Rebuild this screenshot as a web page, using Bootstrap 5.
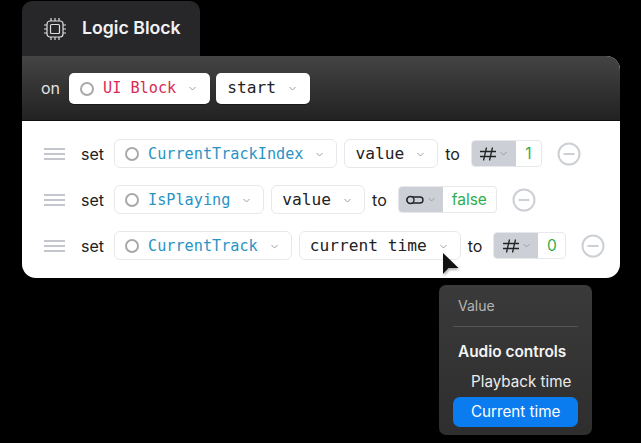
<!DOCTYPE html>
<html lang="en">
<head>
    <meta charset="UTF-8">
    <meta name="viewport" content="width=device-width, initial-scale=1.0">
    <title>Logic Block</title>
    <link href="https://cdn.jsdelivr.net/npm/bootstrap@5.3.0/dist/css/bootstrap.min.css" rel="stylesheet">
    <style>
        html, body { height: 100%; }
        body {
            background: #000;
            font-family: Inter, "Liberation Sans", sans-serif;
            color: #222;
            overflow: hidden;
        }
        .stage { position: relative; width: 641px; height: 443px; padding: 1px 21px 0 22px; }
        .block-tab {
            width: 178px; height: 55px;
            background: #27272a;
            border-radius: 10px 10px 0 0;
            color: #f2f2f2;
            font-size: 17.7px; font-weight: 600;
            padding-left: 22px;
            gap: 16px;
        }
        .block-card { border-radius: 0 14px 14px 14px; overflow: hidden; background: #fff; }
        .block-head {
            height: 65px;
            background: linear-gradient(#444, #222);
            border-bottom: 1px solid #111;
            padding-left: 19px;
            gap: 6px;
            color: #e4e4e4;
            font-size: 16px;
        }
        .block-head .word { margin-right: 3px; }
        .block-body { height: 157px; padding: 18px 0 0 22px; gap: 17px; }
        .block-row { height: 29px; gap: 7px; font-size: 16px; color: #222; }
        .grip { width: 21px; height: 12px; margin-right: 9px; flex: none; }
        .word { flex: none; }
        .word-set { margin-right: 3px; }
        .word-to { margin-right: 4px; }
        .chip {
            height: 29px;
            border: 1px solid #e6e8eb;
            border-radius: 6px;
            background: #fff;
            font-family: "DejaVu Sans Mono", "Liberation Mono", monospace;
            font-size: 16.2px;
            color: #222;
            padding: 1px 13px 0 10px;
            flex: none;
            white-space: nowrap;
        }
        .block-head .chip { height: 31px; border: 0; border-radius: 5px; padding: 1px 14px 0 11px; box-shadow: 0 1px 1px rgba(0,0,0,.4); }
        .ring { width: 14px; height: 14px; border: 2px solid #a9a9a9; border-radius: 50%; margin-right: 9px; flex: none; }
        .chev { width: 7px; height: 5px; margin-left: 13px; flex: none; }
        .txt-red { color: #d92a55; font-size: 15.2px; }
        .txt-blue { color: #2a93c4; font-size: 15.2px; }
        .type-group {
            height: 27px;
            border: 1px solid #e6e8eb;
            border-radius: 4px;
            overflow: hidden;
            flex: none;
        }
        .type-pick { width: 44px; background: #ccd0d6; gap: 4px; }
        .type-pick .chev { margin-left: 0; }
        .type-val { color: #2fae4e; font-size: 15.5px; padding: 0 9px; }
        .num-one { width: 25px; padding: 0; }
        .num-zero { width: 27px; padding: 0; }
        .minus { width: 24px; height: 24px; margin-left: 8px; flex: none; }
        .cursor { position: absolute; left: 442px; top: 252px; width: 19px; height: 25px; filter: drop-shadow(1px 2px 1px rgba(0,0,0,.3)); overflow: visible; }
        .value-menu {
            position: absolute; left: 439px; top: 285px;
            width: 153px; height: 150px;
            background: linear-gradient(#3a3a3a, #2e2e2e);
            border-radius: 7px;
            padding: 0 14px;
            font-size: 15.2px;
            color: #ececec;
        }
        .menu-title { color: #b5b5b5; font-size: 14px; height: 30px; margin: 6px 0 5px 5px; line-height: 30px; }
        .menu-line { height: 1px; background: #555; margin-bottom: 14px; }
        .menu-group { font-weight: 600; margin-left: 5px; height: 22px; line-height: 22px; color: #f4f4f4; font-size: 15.4px; }
        .menu-item { height: 30px; line-height: 30px; padding-left: 18px; }
        .menu-item-on { background: #0a7cf0; border-radius: 7px; color: #fff; }
    </style>
</head>
<body>
<svg width="0" height="0" class="d-block">
    <defs>
        <symbol id="chev" viewBox="0 0 7 5"><path d="M.5 1l3 3 3-3" fill="none" stroke="#9aa0a6" stroke-width="1"/></symbol>
        <symbol id="grip" viewBox="0 0 21 12"><path d="M0 1h21M0 6h21M0 11h21" stroke="#c3c7cd" stroke-width="2"/></symbol>
        <symbol id="minus" viewBox="0 0 24 24"><circle cx="12" cy="12" r="10.5" fill="none" stroke="#ccd0d5" stroke-width="2"/><path d="M6.5 12h11" stroke="#ccd0d5" stroke-width="2"/></symbol>
        <symbol id="hash" viewBox="0 0 16 14"><path d="M0 4.5h16M0 9.5h16M6.5 .5L3.5 13.5M12.5 .5L9.5 13.5" fill="none" stroke="#222" stroke-width="1.3"/></symbol>
    </defs>
</svg>
<div class="stage">
    <div class="block-tab d-flex align-items-center">
        <svg width="22" height="22" viewBox="0 0 22 22" fill="none" stroke="#ddd" stroke-width="1.2">
            <rect x="3" y="3" width="16" height="16" rx="3"/>
            <rect x="6.5" y="6.5" width="9" height="9" rx="1"/>
            <path d="M7 0v3M11 0v3M15 0v3M7 19v3M11 19v3M15 19v3M0 7h3M0 11h3M0 15h3M19 7h3M19 11h3M19 15h3"/>
        </svg>
        <span>Logic Block</span>
    </div>
    <div class="block-card">
        <div class="block-head d-flex align-items-center">
            <span class="word">on</span>
            <div class="chip d-flex align-items-center"><span class="ring"></span><span class="txt-red">UI Block</span><svg class="chev"><use href="#chev"/></svg></div>
            <div class="chip d-flex align-items-center"><span>start</span><svg class="chev"><use href="#chev"/></svg></div>
        </div>
        <div class="block-body d-flex flex-column">
            <div class="block-row d-flex align-items-center">
                <svg class="grip"><use href="#grip"/></svg>
                <span class="word word-set">set</span>
                <div class="chip d-flex align-items-center"><span class="ring"></span><span class="txt-blue">CurrentTrackIndex</span><svg class="chev"><use href="#chev"/></svg></div>
                <div class="chip d-flex align-items-center"><span>value</span><svg class="chev"><use href="#chev"/></svg></div>
                <span class="word word-to">to</span>
                <div class="type-group d-flex">
                    <div class="type-pick d-flex align-items-center justify-content-center"><svg width="16" height="14"><use href="#hash"/></svg><svg class="chev"><use href="#chev"/></svg></div>
                    <div class="type-val num-one d-flex align-items-center justify-content-center">1</div>
                </div>
                <svg class="minus"><use href="#minus"/></svg>
            </div>
            <div class="block-row d-flex align-items-center">
                <svg class="grip"><use href="#grip"/></svg>
                <span class="word word-set">set</span>
                <div class="chip d-flex align-items-center"><span class="ring"></span><span class="txt-blue">IsPlaying</span><svg class="chev"><use href="#chev"/></svg></div>
                <div class="chip d-flex align-items-center"><span>value</span><svg class="chev"><use href="#chev"/></svg></div>
                <span class="word word-to">to</span>
                <div class="type-group d-flex">
                    <div class="type-pick d-flex align-items-center justify-content-center">
                        <svg width="18" height="10" viewBox="0 0 18 10" fill="none" stroke="#222" stroke-width="1.4"><rect x="1" y="2" width="16" height="6" rx="3"/><circle cx="4.5" cy="5" r="3.5" fill="#ccd0d6"/></svg>
                        <svg class="chev"><use href="#chev"/></svg>
                    </div>
                    <div class="type-val d-flex align-items-center">false</div>
                </div>
                <svg class="minus"><use href="#minus"/></svg>
            </div>
            <div class="block-row d-flex align-items-center">
                <svg class="grip"><use href="#grip"/></svg>
                <span class="word word-set">set</span>
                <div class="chip d-flex align-items-center"><span class="ring"></span><span class="txt-blue">CurrentTrack</span><svg class="chev"><use href="#chev"/></svg></div>
                <div class="chip d-flex align-items-center"><span>current time</span><svg class="chev"><use href="#chev"/></svg></div>
                <span class="word word-to">to</span>
                <div class="type-group d-flex">
                    <div class="type-pick d-flex align-items-center justify-content-center"><svg width="16" height="14"><use href="#hash"/></svg><svg class="chev"><use href="#chev"/></svg></div>
                    <div class="type-val num-zero d-flex align-items-center justify-content-center">0</div>
                </div>
                <svg class="minus"><use href="#minus"/></svg>
            </div>
        </div>
    </div>

    <svg class="cursor" viewBox="0 0 19 25"><path d="M1 1V22L6.5 16H16.5z" fill="#111"/></svg>

    <div class="value-menu">
        <div class="menu-title">Value</div>
        <div class="menu-line"></div>
        <div class="menu-group">Audio controls</div>
        <div class="menu-item mt-1">Playback time</div>
        <div class="menu-item menu-item-on">Current time</div>
    </div>
</div>
</body>
</html>
